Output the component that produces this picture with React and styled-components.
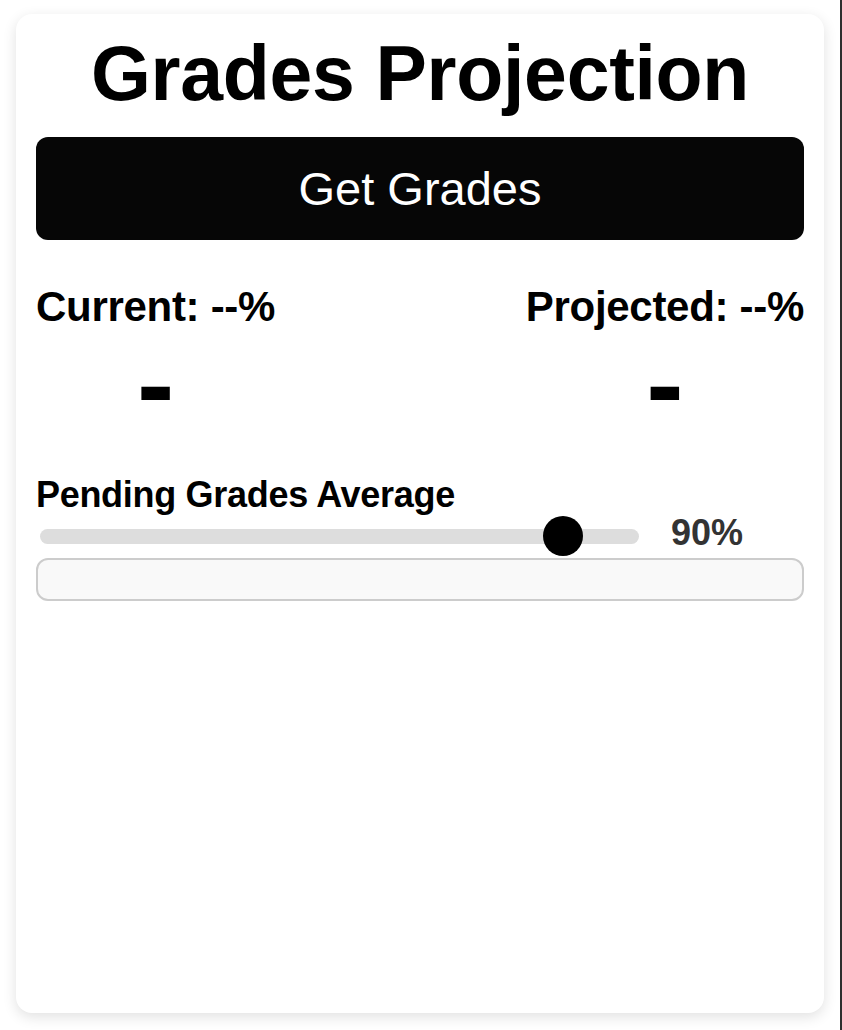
import styled, { createGlobalStyle } from "styled-components";

const GlobalStyle = createGlobalStyle`
  html, body {
    margin: 0;
    padding: 0;
    background: #ffffff;
  }
  body {
    border-right: 2px solid #2e2e2e;
    min-height: 100vh;
    box-sizing: border-box;
    font-family: "Liberation Sans", Arial, sans-serif;
  }
`;

const Card = styled.div`
  margin: 14px 16px 0;
  height: 999px;
  box-sizing: border-box;
  padding: 21px 20px 20px;
  background: #ffffff;
  border-radius: 16px;
  box-shadow: 0 4px 14px rgba(0, 0, 0, 0.12);
  display: flex;
  flex-direction: column;
`;

const Title = styled.h1`
  margin: 0;
  font-size: 77px;
  line-height: 1;
  font-weight: 700;
  letter-spacing: -0.3px;
  text-align: center;
  color: #000;
`;

const GetButton = styled.button`
  margin-top: 25px;
  height: 103px;
  border: none;
  border-radius: 12px;
  background: #060606;
  color: #ffffff;
  font-family: "Liberation Sans", Arial, sans-serif;
  font-size: 47px;
  cursor: pointer;
`;

const Stats = styled.div`
  margin-top: 46px;
  display: flex;
  justify-content: space-between;
`;

const Stat = styled.div`
  display: flex;
  flex-direction: column;
  align-items: center;
`;

const Label = styled.div`
  font-size: 42px;
  line-height: 1;
  font-weight: 700;
  letter-spacing: -0.3px;
  color: #000;
`;

const Dash = styled.div`
  margin-top: 0;
  font-size: 112px;
  line-height: 1;
  font-weight: 700;
  color: #000;
`;

const SectionTitle = styled.div`
  margin-top: 37px;
  font-size: 36px;
  line-height: 1;
  font-weight: 700;
  letter-spacing: -0.3px;
  color: #000;
`;

const SliderRow = styled.div`
  margin-top: 3px;
  display: flex;
  align-items: center;
  height: 40px;
`;

const Range = styled.input`
  flex: 1;
  margin: 0 0 0 4px;
  height: 40px;
  background: transparent;
  -webkit-appearance: none;
  appearance: none;

  &::-webkit-slider-runnable-track {
    height: 15px;
    border-radius: 8px;
    background: #dddddd;
  }
  &::-webkit-slider-thumb {
    -webkit-appearance: none;
    width: 40px;
    height: 40px;
    margin-top: -12.5px;
    border-radius: 50%;
    background: #000;
    border: none;
  }
`;

const Value = styled.div`
  flex: 0 0 165px;
  box-sizing: border-box;
  padding-left: 32px;
  margin-bottom: 6px;
  font-size: 36px;
  line-height: 1;
  font-weight: 700;
  color: #333333;
`;

const Field = styled.input`
  margin-top: 2px;
  height: 43px;
  box-sizing: border-box;
  border: 2px solid #cccccc;
  border-radius: 12px;
  background: #f9f9f9;
  outline: none;
  padding: 0 12px;
  font-family: "Liberation Sans", Arial, sans-serif;
  font-size: 18px;
`;

const App = () => {
  return (
    <>
      <GlobalStyle />
      <Card>
        <Title>Grades Projection</Title>
        <GetButton>Get Grades</GetButton>
        <Stats>
          <Stat>
            <Label>Current: --%</Label>
            <Dash>-</Dash>
          </Stat>
          <Stat>
            <Label>Projected: --%</Label>
            <Dash>-</Dash>
          </Stat>
        </Stats>
        <SectionTitle>Pending Grades Average</SectionTitle>
        <SliderRow>
          <Range type="range" min="0" max="100" defaultValue="90" />
          <Value>90%</Value>
        </SliderRow>
        <Field type="text" />
      </Card>
    </>
  );
};

export default App;
